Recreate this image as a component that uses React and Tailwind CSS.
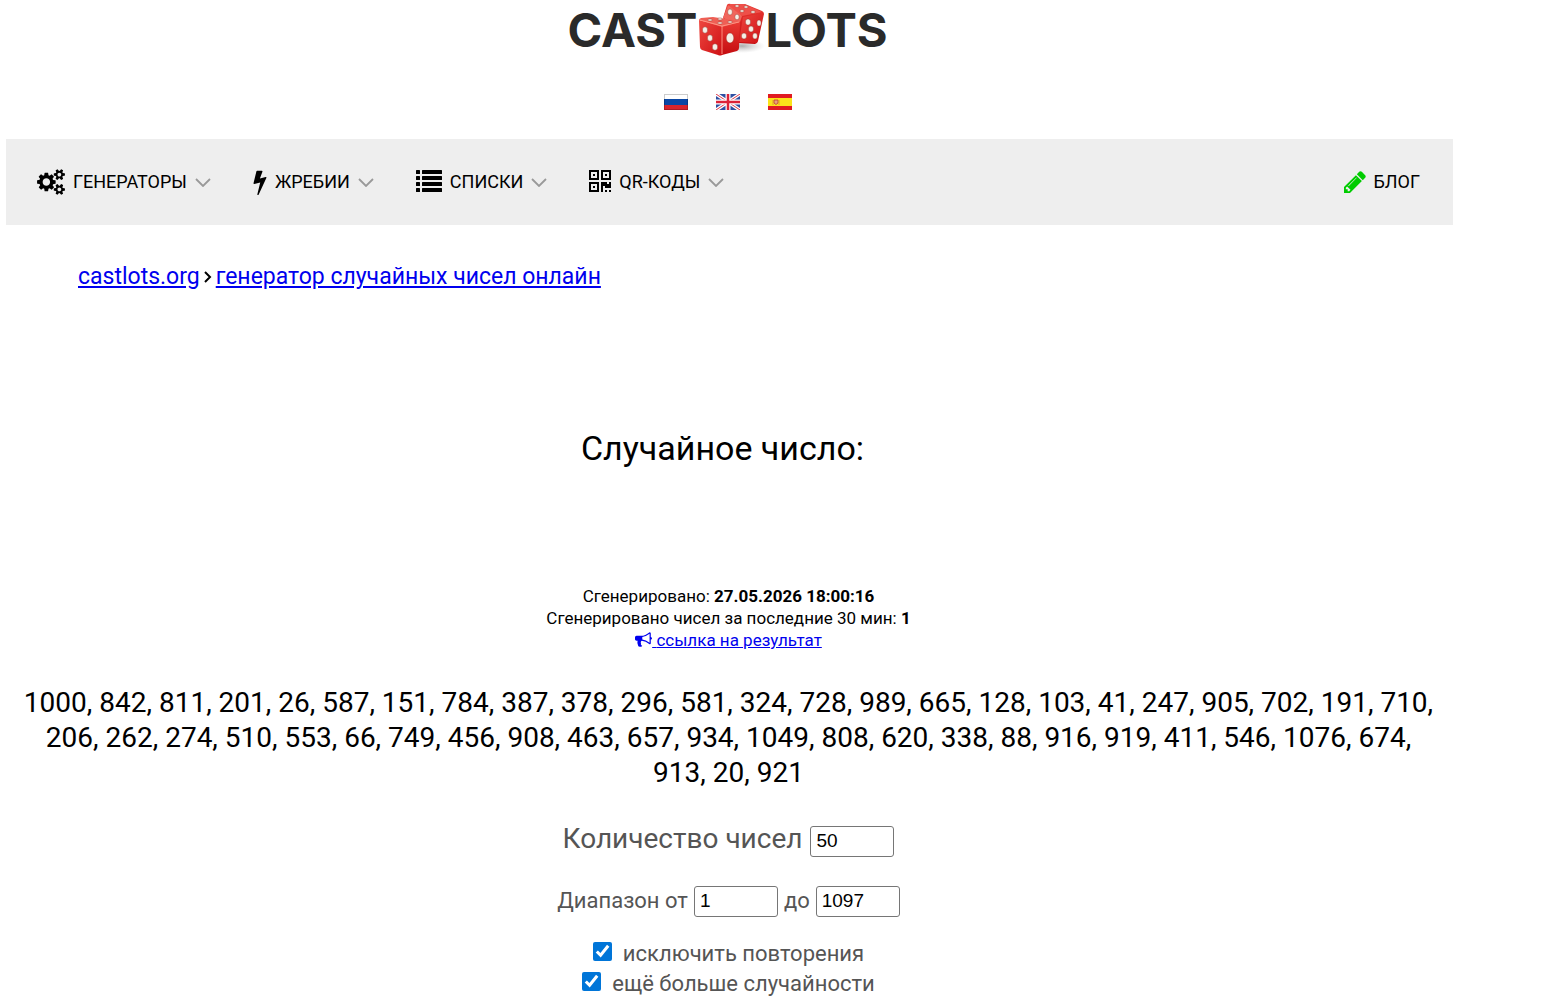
import React from 'react';

const COGS_PATH =
  'M896 896q0-106-75-181t-181-75-181 75-75 181 75 181 181 75 181-75 75-181zm768 512q0-52-38-90t-90-38-90 38-38 90q0 53 37.5 90.5t90.5 37.5 90.5-37.5 37.5-90.5zm0-1024q0-52-38-90t-90-38-90 38-38 90q0 53 37.5 90.5t90.5 37.5 90.5-37.5 37.5-90.5zm-384 421v185q0 10-7 19.5t-16 10.5l-155 24q-11 35-32 76 34 48 90 115 7 11 7 20 0 12-7 19-23 30-82.5 89.5t-78.5 59.5q-11 0-21-7l-115-90q-37 19-77 31-11 108-23 155-7 24-30 24h-186q-11 0-20-7.5t-10-17.5l-23-153q-34-10-75-31l-118 89q-7 7-20 7-11 0-21-8-144-133-144-160 0-9 7-19 10-14 41-53t47-61q-23-44-35-82l-152-24q-10-1-17-9.5t-7-19.5v-185q0-10 7-19.5t16-10.5l155-24q11-35 32-76-34-48-90-115-7-11-7-20 0-12 7-20 22-30 82-89t79-59q11 0 21 7l115 90q34-18 77-32 11-108 23-154 7-24 30-24h186q11 0 20 7.5t10 17.5l23 153q34 10 75 31l118-89q8-7 20-7 11 0 21 8 144 133 144 160 0 8-7 19-12 16-42 54t-45 60q23 48 34 82l152 23q10 2 17 10.5t7 19.5zm640 533v140q0 16-149 31-12 27-30 52 51 113 51 138 0 4-4 7-122 71-124 71-8 0-46-47t-52-68q-20 2-30 2t-30-2q-14 21-52 68t-46 47q-2 0-124-71-4-3-4-7 0-25 51-138-18-25-30-52-149-15-149-31v-140q0-16 149-31 13-29 30-52-51-113-51-138 0-4 4-7 4-2 35-20t59-34 30-16q8 0 46 46.5t52 67.5q20-2 30-2t30 2q51-71 92-112l6-2q4 0 124 70 4 3 4 7 0 25-51 138 17 23 30 52 149 15 149 31zm0-1024v140q0 16-149 31-12 27-30 52 51 113 51 138 0 4-4 7-122 71-124 71-8 0-46-47t-52-68q-20 2-30 2t-30-2q-14 21-52 68t-46 47q-2 0-124-71-4-3-4-7 0-25 51-138-18-25-30-52-149-15-149-31v-140q0-16 149-31 13-29 30-52-51-113-51-138 0-4 4-7 4-2 35-20t59-34 30-16q8 0 46 46.5t52 67.5q20-2 30-2t30 2q51-71 92-112l6-2q4 0 124 70 4 3 4 7 0 25-51 138 17 23 30 52 149 15 149 31z';
const BOLT_PATH =
  'M1333 566q18 20 7 44l-540 1157q-13 25-42 25-4 0-14-2-17-5-25.5-19t-4.5-30l197-808-406 101q-4 1-12 1-18 0-31-11-18-15-13-39l201-825q4-14 16-23t28-9h328q19 0 32 12.5t13 29.5q0 8-5 18l-171 463 396-98q8-2 12-2 19 0 34 15z';
const PENCIL_PATH =
  'M491 1536l91-91-235-235-91 91v107h128v128h107zm523-928q0-22-22-22-10 0-17 7l-542 542q-7 7-7 17 0 22 22 22 10 0 17-7l542-542q7-7 7-17zm-54-192l416 416-832 832h-416v-416zm683 96q0 53-37 90l-166 166-416-416 166-165q36-38 90-38 53 0 91 38l235 234q37 39 37 91z';
const BULLHORN_PATH =
  'M1664 640q53 0 90.5 37.5t37.5 90.5-37.5 90.5-90.5 37.5v384q0 52-38 90t-90 38q-417-347-812-380-58 19-91 66t-31 100.5 40 92.5q-20 33-23 65.5t6 58 33.5 55 48 50 61.5 50.5q-29 58-111.5 83t-168.5 11.5-132-55.5q-7-23-29.5-87.5t-32-94.5-23-89-15-101 3.5-98.5 22-110.5h-122q-66 0-113-47t-47-113v-192q0-66 47-113t113-47h480q435 0 896-384 52 0 90 38t38 90v384zm-128 604v-954q-394 302-768 343v270q377 42 768 341z';

function CogsIcon() {
  return (
    <svg viewBox="0 0 1920 1792" className="h-[26px] w-7" fill="currentColor" aria-hidden="true">
      <path d={COGS_PATH} />
    </svg>
  );
}

function BoltIcon() {
  return (
    <svg viewBox="448 0 896 1792" className="h-[26px] w-[14px]" fill="currentColor" aria-hidden="true">
      <path d={BOLT_PATH} />
    </svg>
  );
}

function ListIcon() {
  return (
    <svg viewBox="0 0 26 24" className="h-6 w-[26px]" fill="currentColor" aria-hidden="true">
      {[0, 6, 12, 18].map((y) => (
        <g key={y}>
          <rect x="0" y={y} width="4" height="4" rx="0.5" />
          <rect x="6" y={y} width="20" height="4" rx="0.5" />
        </g>
      ))}
    </svg>
  );
}

function QrIcon() {
  return (
    <svg viewBox="0 0 22 24" className="h-6 w-[22px]" fill="currentColor" aria-hidden="true">
      {[[0, 0], [12, 0], [0, 12]].map(([x, y]) => (
        <g key={`${x}-${y}`}>
          <rect x={x + 1} y={y + 1} width="8" height="8" fill="none" stroke="currentColor" strokeWidth="2" />
          <rect x={x + 4} y={y + 4} width="2" height="2" />
        </g>
      ))}
      <path d="M12 12h6v2h2v-2h2v6h-6v-2h-2v6h-2zM16 20h2v2h-2zM20 20h2v2h-2z" />
    </svg>
  );
}

function PencilIcon() {
  return (
    <svg viewBox="128 128 1536 1536" className="size-[22px] text-[#0c0]" fill="currentColor" aria-hidden="true">
      <path d={PENCIL_PATH} />
    </svg>
  );
}

function Chevron() {
  return (
    <svg viewBox="0 0 16 9" className="h-[9px] w-4" fill="none" stroke="#999" strokeWidth="1.8" aria-hidden="true">
      <path d="M1 1l7 7 7-7" />
    </svg>
  );
}

function Dice() {
  return (
    <svg viewBox="0 3 68 54" className="h-[54px] w-[68px]" aria-hidden="true">
      <defs>
        <linearGradient id="front" x1="0" y1="0" x2="1" y2="1">
          <stop offset="0" stopColor="#ee4840" />
          <stop offset="1" stopColor="#cf1014" />
        </linearGradient>
        <linearGradient id="side" x1="0" y1="0" x2="0" y2="1">
          <stop offset="0" stopColor="#ea3a33" />
          <stop offset="1" stopColor="#c40c10" />
        </linearGradient>
        <radialGradient id="shade">
          <stop offset="0" stopColor="#888" stopOpacity="0.7" />
          <stop offset="1" stopColor="#bbb" stopOpacity="0" />
        </radialGradient>
      </defs>
      <ellipse cx="45" cy="46" rx="23" ry="7" fill="url(#shade)" />
      {/* back die */}
      <path d="M30 5q1-2 4-1l14 0 17 7q2 1 2 3l-6 27q-1 3-3 3l-16-1L26 18z" fill="url(#side)" />
      <path d="M33 4h14l18 8-20 4-14-8z" fill="#ee5049" />
      <path d="M31 5l14 11-3 9-16-7z" fill="#f0665c" />
      <path d="M46 17l20-4-6 30-18-1z" fill="url(#front)" />
      <g fill="#f5efe6" stroke="#8d2018" strokeWidth="0.4">
        <ellipse cx="40" cy="6" rx="2" ry="1.2" />
        <ellipse cx="49" cy="7" rx="2" ry="1.2" />
        <ellipse cx="45" cy="11" rx="2" ry="1.2" />
        <ellipse cx="56" cy="12" rx="2.2" ry="1.2" />
        <ellipse cx="33" cy="12" rx="2.4" ry="3" />
        <ellipse cx="40" cy="17" rx="2.2" ry="2.800" />
        <ellipse cx="51" cy="22" rx="2.6" ry="3.1" />
        <ellipse cx="62" cy="23" rx="2.2" ry="3.1" />
        <ellipse cx="54" cy="29" rx="2.6" ry="3" />
        <ellipse cx="47" cy="36" rx="2.6" ry="3" />
        <ellipse cx="58" cy="36" rx="2.4" ry="3" />
      </g>
      {/* front die */}
      <path d="M2 20l23 6v29q-2 1-4 0L5 50q-2-1-2-3z" fill="url(#front)" />
      <path d="M25 26l18-4-1 26q0 2-2 3l-15 4z" fill="url(#side)" />
      <path d="M2 20q0-1 2-2l12-1 26 4 1 1-18 5z" fill="#ef5f55" />
      <path d="M3 20l22 6v28M25 26l17-4" fill="none" stroke="#ff9a88" strokeWidth="0.9" />
      <g fill="#f5efe6" stroke="#8d2018" strokeWidth="0.4">
        <ellipse cx="13" cy="20" rx="2.4" ry="1.1" />
        <ellipse cx="23" cy="19" rx="2.4" ry="1.1" />
        <ellipse cx="23" cy="23" rx="2.6" ry="1.1" />
        <ellipse cx="33" cy="22" rx="2.4" ry="1.1" />
        <ellipse cx="8" cy="30" rx="2.6" ry="3.2" />
        <ellipse cx="13" cy="38" rx="2.6" ry="3.2" />
        <ellipse cx="18" cy="47" rx="2.7" ry="3.3" />
        <ellipse cx="33" cy="38" rx="3.8" ry="5" />
      </g>
    </svg>
  );
}

function FlagRu() {
  return (
    <svg viewBox="0 0 24 16" className="h-4 w-6" aria-hidden="true">
      <rect width="24" height="16" fill="#fff" />
      <rect y="5" width="24" height="6" fill="#0a47a5" />
      <rect y="11" width="24" height="5" fill="#d8242c" />
      <rect x="0.5" y="0.5" width="23" height="15" fill="none" stroke="#000" strokeOpacity="0.2" />
    </svg>
  );
}

function FlagGb() {
  return (
    <svg viewBox="0 0 24 16" className="h-4 w-6" aria-hidden="true">
      <rect width="24" height="16" fill="#2f4fa2" />
      <path d="M0 0l24 16M24 0L0 16" stroke="#fff" strokeWidth="3.5" />
      <path d="M0 0l24 16M24 0L0 16" stroke="#e0394a" strokeWidth="1" />
      <path d="M12 0v16M0 8h24" stroke="#fff" strokeWidth="5" />
      <path d="M12 0v16M0 8h24" stroke="#dc2238" strokeWidth="2.5" />
    </svg>
  );
}

function FlagEs() {
  return (
    <svg viewBox="0 0 24 16" className="h-4 w-6" aria-hidden="true">
      <rect width="24" height="16" fill="#e01b22" />
      <rect y="4" width="24" height="8" fill="#fbe41a" />
      <path d="M6 6h4v3q-2 3-4 0z" fill="#e8a27a" stroke="#c0392b" strokeWidth="0.8" />
      <path d="M5 6v5M11 6v5" stroke="#d98a3a" strokeWidth="0.8" />
    </svg>
  );
}

const languages = [
  { code: 'ru', label: 'Русский', Flag: FlagRu },
  { code: 'en', label: 'English', Flag: FlagGb },
  { code: 'es', label: 'Español', Flag: FlagEs },
];

const menu = [
  { title: 'ГЕНЕРАТОРЫ', Icon: CogsIcon },
  { title: 'ЖРЕБИИ', Icon: BoltIcon },
  { title: 'СПИСКИ', Icon: ListIcon },
  { title: 'QR-КОДЫ', Icon: QrIcon },
];

const numbers = [
  1000, 842, 811, 201, 26, 587, 151, 784, 387, 378, 296, 581, 324, 728, 989, 665, 128, 103, 41, 247, 905, 702, 191, 710,
  206, 262, 274, 510, 553, 66, 749, 456, 908, 463, 657, 934, 1049, 808, 620, 338, 88, 916, 919, 411, 546, 1076, 674,
  913, 20, 921,
];

function NumberInput({ id, value }) {
  return (
    <input
      id={id}
      type="text"
      inputMode="numeric"
      defaultValue={value}
      className='h-[31px] w-[84px] rounded-[3px] border border-[#767676] bg-white px-[5px] font-["Liberation_Sans",sans-serif] text-[19px] text-black'
    />
  );
}

function Option({ children }) {
  return (
    <label className="flex h-[30px] items-center justify-center gap-[11px]">
      <input type="checkbox" defaultChecked className="mb-1 size-[19px] accent-[#0075d8]" />
      {children}
    </label>
  );
}

export default function App() {
  return (
    <div className='ml-1.5 mr-[104px] font-["Roboto",sans-serif] text-black'>
      <header className="flex flex-col items-center pr-1">
        <a href="#" className='flex h-[60px] items-center font-["Inter",sans-serif] text-[47px] font-bold text-[#2a2a2a]'>
          CAST
          <Dice />
          LOTS
        </a>
        <div className="flex h-[79px] gap-7 pt-[34px]">
          {languages.map(({ code, label, Flag }) => (
            <a key={code} href={`#${code}`} aria-label={label} className="h-4">
              <Flag />
            </a>
          ))}
        </div>
      </header>

      <nav className="flex h-[86px] items-center justify-between bg-[#eee] pl-[31px] pr-[33px] text-lg">
        <div className="flex items-center gap-[42px]">
          {menu.map(({ title, Icon }) => (
            <button key={title} type="button" className="flex items-center gap-2">
              <Icon />
              {title}
              <Chevron />
            </button>
          ))}
        </div>
        <a href="#blog" className="flex items-center gap-2">
          <PencilIcon />
          БЛОГ
        </a>
      </nav>

      <div className="flex items-center gap-1 pl-[72px] pt-9 text-[23px] leading-8">
        <a href="#" className="text-[#0000ee] underline">castlots.org</a>
        <svg viewBox="0 0 8 14" className="h-3.5 w-2" fill="none" stroke="currentColor" strokeWidth="2" role="img" aria-label="›">
          <path d="M1 2l5 5-5 5" />
        </svg>
        <a href="#random" className="text-[#0000ee] underline">генератор случайных чисел онлайн</a>
      </div>

      <main className="pr-0.5 text-center">
        <h1 className="pr-3 pt-[135px] text-[34px] leading-10">Случайное число:</h1>

        <div className="pt-[117px] text-[17px] leading-[22px]">
          <p>Сгенерировано: <b>27.05.2026 18:00:16</b></p>
          <p>Сгенерировано чисел за последние 30 мин: <b>1</b></p>
          <p>
            <a href="#result" className="text-[#0000ee] underline">
              <svg viewBox="0 0 1792 1792" className="inline size-[17px] align-[-2px]" fill="currentColor" aria-hidden="true">
                <path d={BULLHORN_PATH} />
              </svg>{' '}
              ссылка на результат
            </a>
          </p>
        </div>

        <p className="px-[15px] pt-[34px] text-[28px] leading-[35px]">{numbers.join(', ')}</p>

        <form className="text-[22px] text-[#555]">
          <div className="mt-[31px] flex h-10 items-center justify-center gap-2 text-[28px] leading-8">
            <label htmlFor="count" className="pb-1">Количество чисел</label>
            <NumberInput id="count" value="50" />
          </div>
          <div className="mt-5 flex h-10 items-center justify-center gap-1.5">
            <label htmlFor="from" className="pb-0.5">Диапазон от</label>
            <NumberInput id="from" value="1" />
            <label htmlFor="to" className="pb-0.5">до</label>
            <NumberInput id="to" value="1097" />
          </div>
          <div className="mt-[17px]">
            <Option>исключить повторения</Option>
            <Option>ещё больше случайности</Option>
          </div>
        </form>
      </main>
    </div>
  );
}
